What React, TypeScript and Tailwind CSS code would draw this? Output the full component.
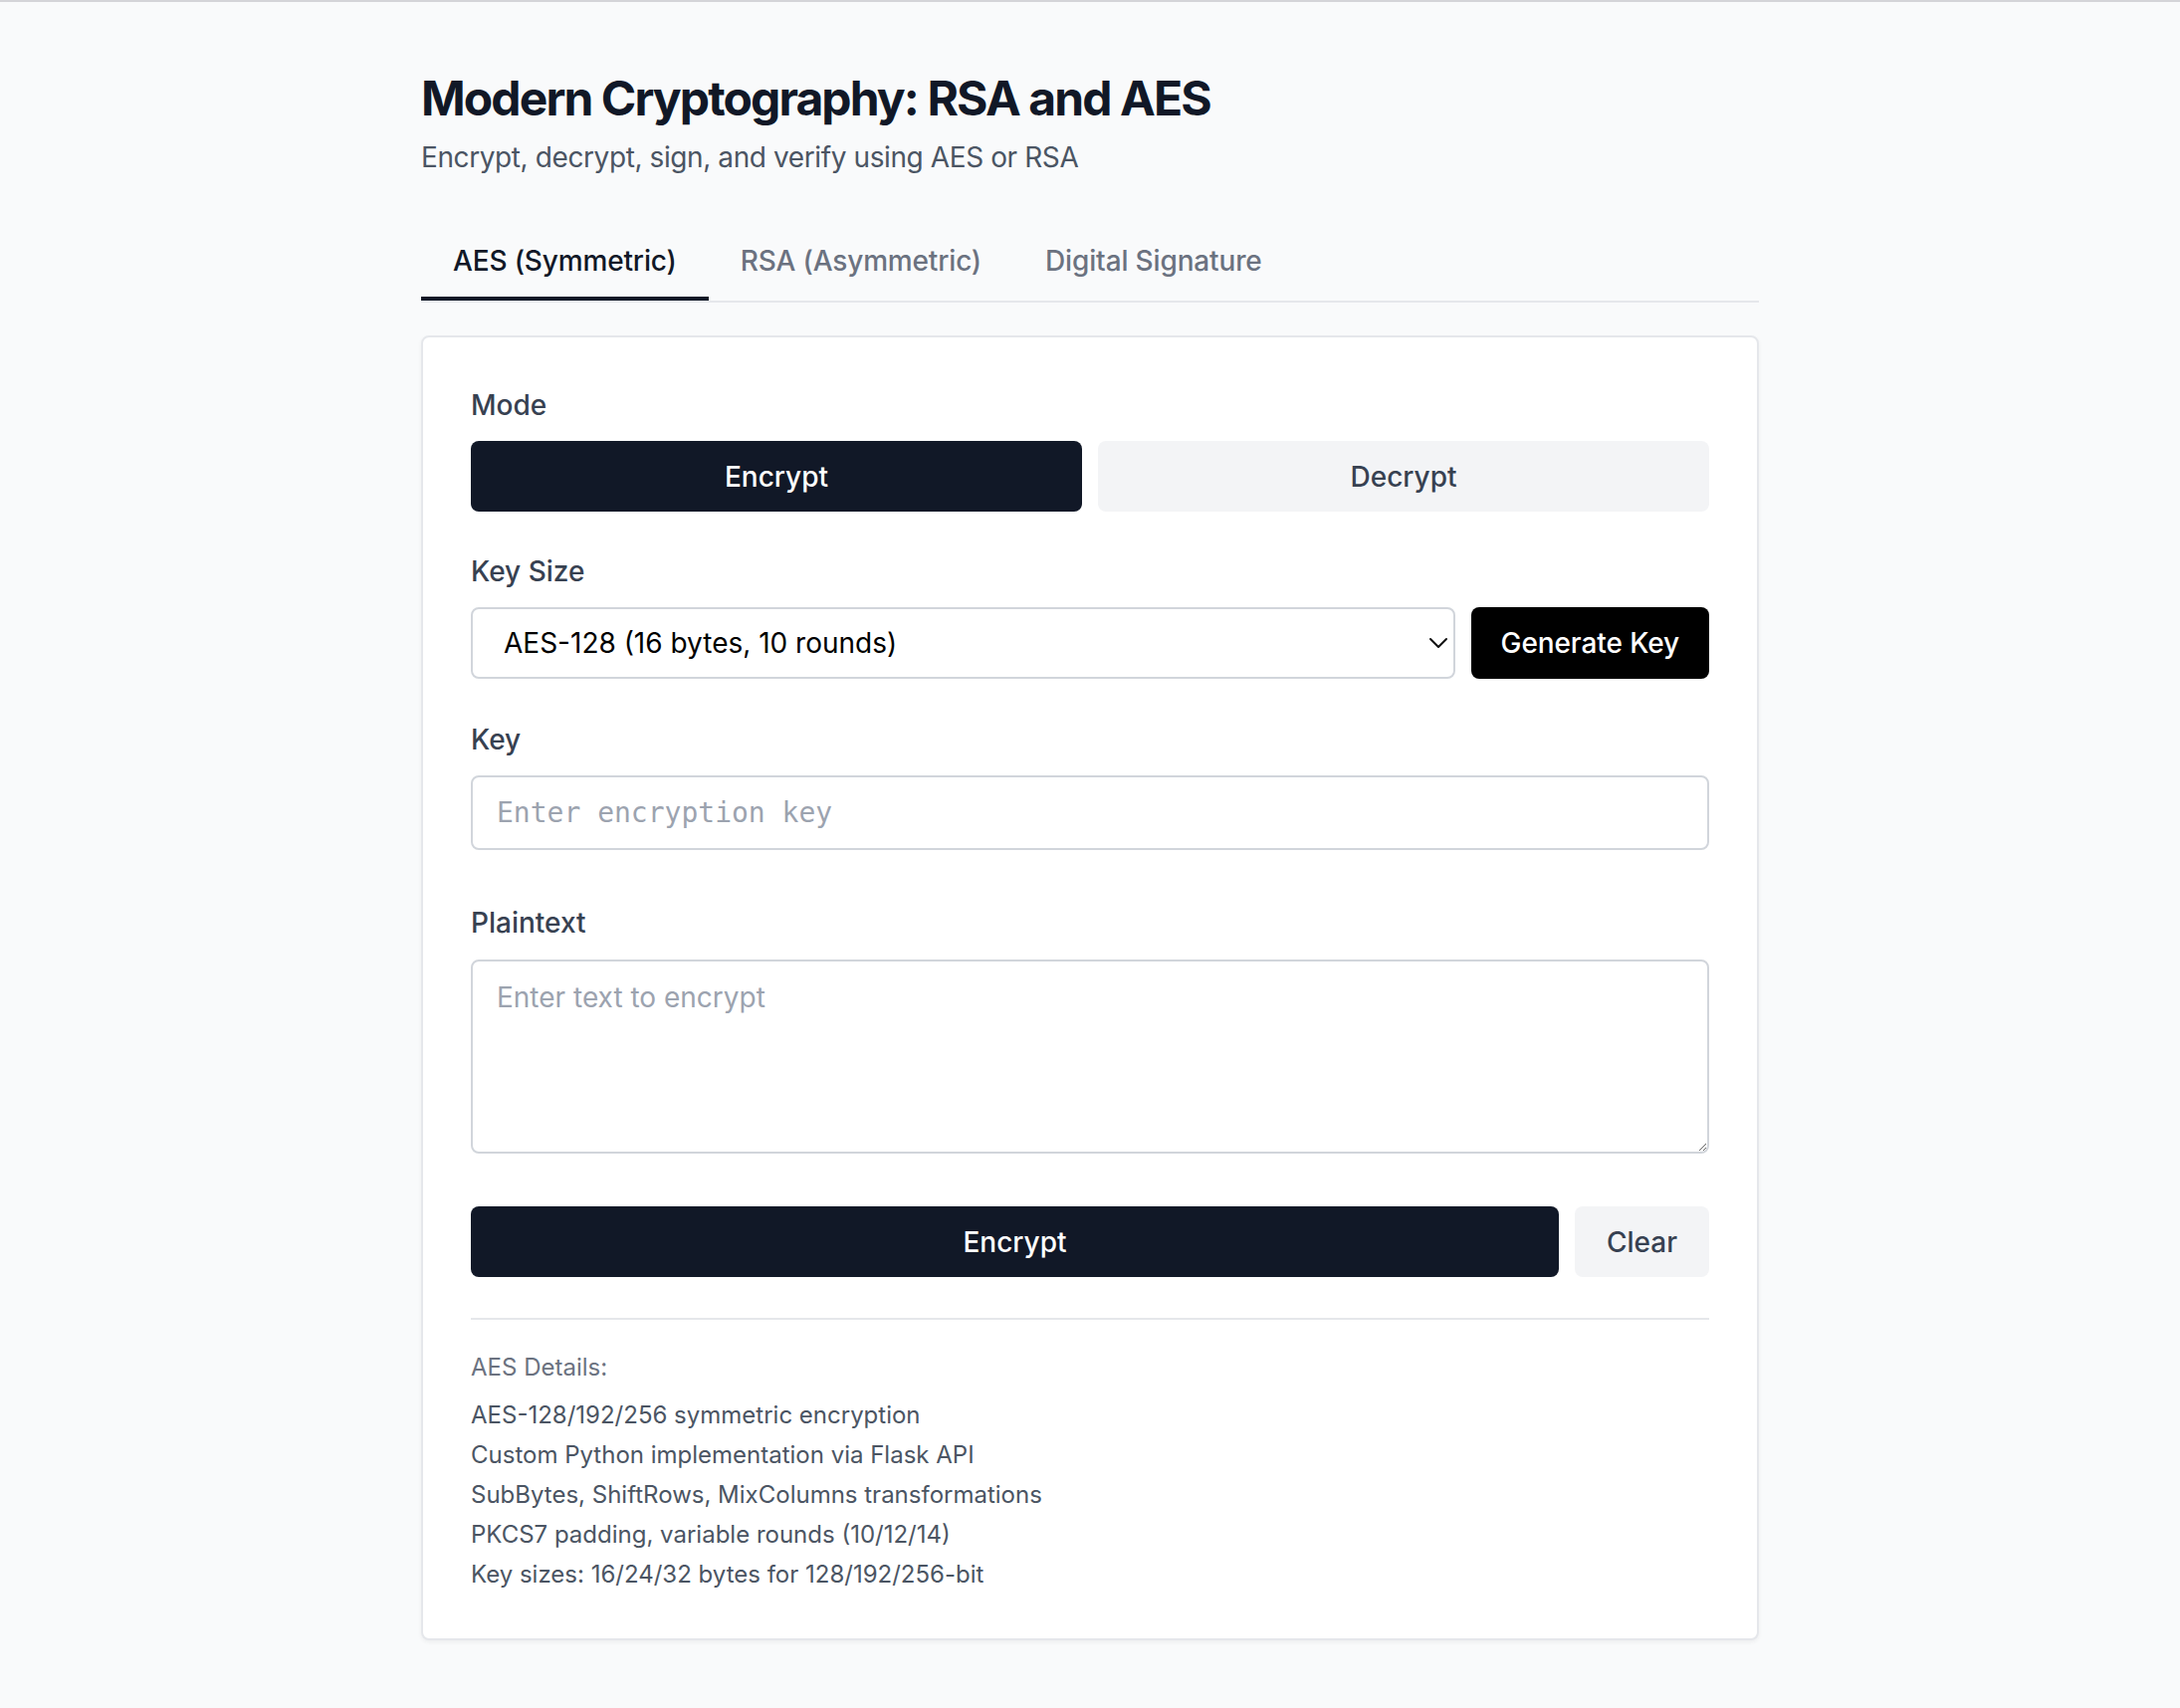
import React, { useState } from "react";

const details = [
  "AES-128/192/256 symmetric encryption",
  "Custom Python implementation via Flask API",
  "SubBytes, ShiftRows, MixColumns transformations",
  "PKCS7 padding, variable rounds (10/12/14)",
  "Key sizes: 16/24/32 bytes for 128/192/256-bit",
];

const tabs = ["AES (Symmetric)", "RSA (Asymmetric)", "Digital Signature"];

function Label({ children }: { children: React.ReactNode }) {
  return (
    <label className="block text-[28px] leading-[40px] font-medium text-[#374151]">
      {children}
    </label>
  );
}

export default function App() {
  const [tab, setTab] = useState(0);
  const [mode, setMode] = useState<"encrypt" | "decrypt">("encrypt");
  const [keySize, setKeySize] = useState("128");
  const [key, setKey] = useState("");
  const [text, setText] = useState("");

  return (
    <div className="min-h-screen bg-[#f9fafb] border-t-2 border-[#d4d4d8] font-['Inter',sans-serif]">
      <div className="mx-auto w-[1344px] pt-[65px] pb-[70px]">
        <h1 className="text-[48px] leading-[64px] font-bold tracking-[-1.9px] text-[#111827]">
          Modern Cryptography: RSA and AES
        </h1>
        <p className="mt-[7px] text-[28px] leading-[40px] tracking-[-0.4px] text-[#4b5563]">
          Encrypt, decrypt, sign, and verify using AES or RSA
        </p>

        <div className="mt-[48px] flex border-b-2 border-[#e5e7eb]">
          {tabs.map((t, i) => (
            <button
              key={t}
              onClick={() => setTab(i)}
              className={
                i === tab
                  ? "px-[32px] pt-[16px] pb-[16px] border-b-4 border-[#111827] text-[28px] leading-[40px] font-medium tracking-[-0.15px] text-[#111827]"
                  : "px-[32px] pt-[16px] pb-[16px] border-b-4 border-transparent text-[28px] leading-[40px] font-medium tracking-[-0.15px] text-[#6b7280]"
              }
            >
              {t}
            </button>
          ))}
        </div>

        <div className="mt-[33px] rounded-[8px] border-2 border-[#e5e7eb] bg-white p-[48px] shadow-[0_2px_4px_rgba(0,0,0,0.05)]">
          <Label>Mode</Label>
          <div className="mt-[16px] grid grid-cols-2 gap-[16px]">
            <button
              onClick={() => setMode("encrypt")}
              className={
                mode === "encrypt"
                  ? "h-[71px] rounded-[8px] bg-[#111827] text-[28px] font-medium text-white"
                  : "h-[71px] rounded-[8px] bg-[#f3f4f6] text-[28px] font-medium text-[#374151]"
              }
            >
              Encrypt
            </button>
            <button
              onClick={() => setMode("decrypt")}
              className={
                mode === "decrypt"
                  ? "h-[71px] rounded-[8px] bg-[#111827] text-[28px] font-medium text-white"
                  : "h-[71px] rounded-[8px] bg-[#f3f4f6] text-[28px] font-medium text-[#374151]"
              }
            >
              Decrypt
            </button>
          </div>

          <div className="mt-[40px]">
            <Label>Key Size</Label>
          </div>
          <div className="mt-[16px] flex gap-[16px]">
            <div className="relative flex-1">
              <select
                value={keySize}
                onChange={(e) => setKeySize(e.target.value)}
                className="h-[72px] w-full appearance-none rounded-[8px] border-2 border-[#d1d5db] bg-white pl-[31px] pr-[48px] text-[28px] text-black outline-none"
              >
                <option value="128">AES-128 (16 bytes, 10 rounds)</option>
                <option value="192">AES-192 (24 bytes, 12 rounds)</option>
                <option value="256">AES-256 (32 bytes, 14 rounds)</option>
              </select>
              <svg
                className="pointer-events-none absolute right-[7px] top-1/2 -translate-y-1/2"
                width="20"
                height="12"
                viewBox="0 0 20 12"
                fill="none"
              >
                <path d="M2 2l8 8 8-8" stroke="#111" strokeWidth="2" strokeLinecap="round" strokeLinejoin="round" />
              </svg>
            </div>
            <button className="h-[72px] rounded-[8px] bg-black px-[30px] text-[28px] font-medium tracking-[-0.1px] text-white">
              Generate Key
            </button>
          </div>

          <div className="mt-[41px]">
            <Label>Key</Label>
          </div>
          <input
            value={key}
            onChange={(e) => setKey(e.target.value)}
            placeholder="Enter encryption key"
            className="mt-[16px] block h-[75px] w-full rounded-[8px] border-2 border-[#d1d5db] px-[24px] font-['DejaVu_Sans_Mono',monospace] text-[28px] text-[#111827] outline-none placeholder:text-[#9ca3af]"
          />

          <div className="mt-[53px]">
            <Label>Plaintext</Label>
          </div>
          <textarea
            value={text}
            onChange={(e) => setText(e.target.value)}
            placeholder="Enter text to encrypt"
            className="mt-[17px] block h-[195px] w-full rounded-[8px] border-2 border-[#d1d5db] px-[24px] py-[16px] text-[28px] leading-[40px] text-[#111827] outline-none placeholder:text-[#9ca3af]"
          />

          <div className="mt-[53px] flex gap-[16px]">
            <button className="h-[71px] flex-1 rounded-[8px] bg-[#111827] text-[28px] font-medium text-white">
              {mode === "encrypt" ? "Encrypt" : "Decrypt"}
            </button>
            <button
              onClick={() => {
                setKey("");
                setText("");
              }}
              className="h-[71px] rounded-[8px] bg-[#f3f4f6] px-[32px] text-[28px] font-medium text-[#374151]"
            >
              Clear
            </button>
          </div>

          <div className="mt-[41px] border-t-2 border-[#e5e7eb] pt-[32px]">
            <p className="text-[24px] leading-[32px] text-[#6b7280]">AES Details:</p>
            <ul className="mt-[16px] flex flex-col gap-[8px] text-[24px] leading-[32px] text-[#4b5563]">
              {details.map((d) => (
                <li key={d}>{d}</li>
              ))}
            </ul>
          </div>
        </div>
      </div>
    </div>
  );
}
